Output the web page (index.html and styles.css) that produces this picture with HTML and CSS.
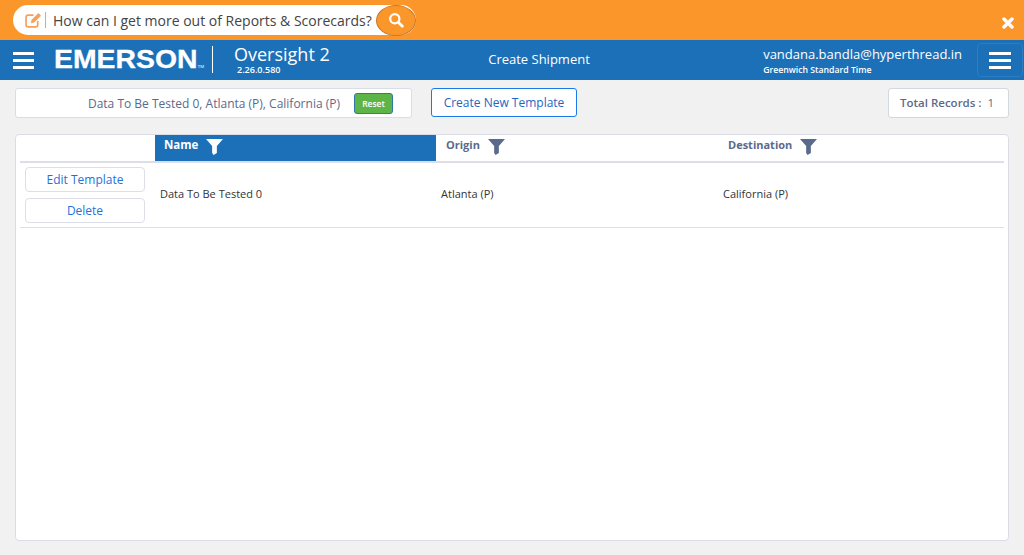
FILE: index.html
```html
<!DOCTYPE html>
<html lang="en">
<head>
  <meta charset="UTF-8">
  <title>Oversight 2</title>
  <link rel="stylesheet" href="styles.css">
</head>
<body>
  <div class="promo">
    <div class="promo-pill">
      <svg class="promo-edit" width="17" height="16" viewBox="0 0 16 15">
        <path d="M12 8.5V12a2 2 0 0 1-2 2H3a2 2 0 0 1-2-2V5a2 2 0 0 1 2-2h5" fill="none" stroke="#f5a15c" stroke-width="1.6"/>
        <path d="M5.5 10.5l.6-3L12.6.9l2.5 2.5-6.5 6.5z" fill="#f5a15c"/>
      </svg>
      <span class="promo-sep"></span>
      <span class="promo-text">How can I get more out of Reports &amp; Scorecards?</span>
      <span class="promo-search">
        <svg width="16" height="16" viewBox="0 0 16 16">
          <circle cx="6.8" cy="6.8" r="4.6" fill="none" stroke="#fff" stroke-width="2.2"/>
          <path d="M10.3 10.3l4 4" stroke="#fff" stroke-width="2.8" stroke-linecap="round"/>
        </svg>
      </span>
    </div>
    <svg class="promo-close" width="12" height="12" viewBox="0 0 12 12">
      <path d="M2 2l8 8M10 2l-8 8" stroke="#fff" stroke-width="3.4" stroke-linecap="round"/>
    </svg>
  </div>

  <header class="navbar">
    <button class="burger burger-left"><span></span><span></span><span></span></button>
    <div class="logo">EMERSON<small>TM</small></div>
    <div class="product">
      <div class="product-name">Oversight 2</div>
      <div class="product-version">2.26.0.580</div>
    </div>
    <div class="nav-link">Create Shipment</div>
    <div class="user">
      <div class="user-mail">vandana.bandla@hyperthread.in</div>
      <div class="user-zone">Greenwich Standard Time</div>
    </div>
    <button class="burger burger-right"><span></span><span></span><span></span></button>
  </header>

  <main class="content">
    <div class="toolbar">
      <div class="filter-box">
        <span class="filter-text">Data To Be Tested 0, Atlanta (P), California (P)</span>
        <button class="btn-reset">Reset</button>
      </div>
      <button class="btn-create">Create New Template</button>
      <div class="total">Total Records :&nbsp; <span class="total-num">1</span></div>
    </div>

    <div class="card">
      <div class="grid grid-head">
        <div class="th"></div>
        <div class="th th-active">Name
          <svg class="funnel" width="17" height="16" viewBox="0 0 18 17"><path d="M0 0h18l-6.5 7.5V15l-3.5 2-1.500-2V7.500z"/></svg>
        </div>
        <div class="th">Origin
          <svg class="funnel" width="17" height="16" viewBox="0 0 18 17"><path d="M0 0h18l-6.5 7.5V15l-3.5 2-1.500-2V7.500z"/></svg>
        </div>
        <div class="th th-dest">Destination
          <svg class="funnel" width="17" height="16" viewBox="0 0 18 17"><path d="M0 0h18l-6.5 7.5V15l-3.5 2-1.500-2V7.500z"/></svg>
        </div>
      </div>
      <div class="grid grid-row">
        <div class="actions">
          <button class="btn-row">Edit Template</button>
          <button class="btn-row">Delete</button>
        </div>
        <div class="td">Data To Be Tested 0</div>
        <div class="td">Atlanta (P)</div>
        <div class="td">California (P)</div>
      </div>
    </div>
  </main>
</body>
</html>
```

FILE: styles.css
```css
html, body {
  height: 100%;
}

body {
  margin: 0;
  font-family: "Open Sans", Arial, sans-serif;
  background-color: #f1f1f1;
  color: #222;
  overflow: hidden;
}

button {
  font-family: inherit;
  cursor: pointer;
}

/* top orange strip */
.promo {
  height: 40px;
  background-color: #fb962b;
  display: flex;
  align-items: center;
  justify-content: space-between;
  padding: 0 10px 0 13px;
  box-sizing: border-box;
}

.promo-pill {
  width: 403px;
  height: 30px;
  background-color: #fff;
  border-radius: 15px;
  display: flex;
  align-items: center;
  padding-left: 12px;
  box-sizing: border-box;
}

.promo-edit {
  flex: none;
}

.promo-sep {
  width: 1px;
  height: 16px;
  margin: 0 7px 0 3px;
  background-color: #f5a15c;
}

.promo-text {
  font-size: 14px;
  color: #444;
  white-space: nowrap;
}

.promo-search {
  width: 40px;
  height: 31px;
  margin-left: auto;
  border: 1px solid #c9782a;
  border-radius: 50%;
  background-color: #fb962b;
  box-sizing: border-box;
  display: flex;
  align-items: center;
  justify-content: center;
}

.promo-close {
  margin-top: 5px;
}

/* blue nav */
.navbar {
  height: 40px;
  background-color: #1c70b8;
  color: #fff;
  display: flex;
  align-items: center;
}

.burger {
  background: none;
  border: none;
  padding: 0;
  display: flex;
  flex-direction: column;
  justify-content: center;
  gap: 4px;
  box-sizing: border-box;
}

.burger span {
  display: block;
  height: 3px;
  background-color: #fff;
}

.burger-left {
  width: 21px;
  margin-left: 13px;
}

.burger-right {
  width: 46px;
  height: 34px;
  margin-left: 15px;
  margin-right: 1px;
  padding: 0 11px;
  border: 1px solid #2b7dc4;
  border-radius: 4px;
}

.logo {
  width: 142px;
  margin-left: 20px;
  margin-right: 1px;
  margin-top: -2px;
  font-family: "Liberation Sans", Arial, sans-serif;
  font-size: 25px;
  font-weight: bold;
  line-height: 1;
  white-space: nowrap;
  transform: scaleX(1.135);
  transform-origin: left center;
  -webkit-text-stroke: 0.3px #fff;
}

.logo small {
  font-size: 4px;
  font-weight: normal;
  -webkit-text-stroke: 0;
}

.product {
  margin-left: 15px;
  padding-left: 21px;
  height: 27px;
  border-left: 1px solid #fff;
  width: 180px;
  margin-top: -1px;
  box-sizing: content-box;
}

.product-name {
  font-size: 18px;
  line-height: 20px;
  margin-top: -2px;
}

.product-version {
  font-size: 9px;
  font-weight: 600;
  line-height: 12px;
  margin-left: 3px;
}

.nav-link {
  width: 102px;
  font-size: 13px;
  text-align: center;
  margin-left: 74px;
  margin-top: -2px;
}

.user {
  margin-left: auto;
}

.user-mail {
  font-size: 13px;
  line-height: 18px;
}

.user-zone {
  font-size: 8.7px;
  font-weight: 600;
  line-height: 12px;
  margin-top: 1px;
}

/* page content */
.content {
  padding: 8px 15px 0;
}

.toolbar {
  height: 30px;
  display: flex;
  align-items: flex-start;
}

.filter-box {
  width: 397px;
  height: 30px;
  display: flex;
  align-items: center;
  justify-content: flex-end;
  padding-right: 18px;
  background-color: #fff;
  border: 1px solid #d9dde6;
  border-radius: 3px;
  box-sizing: border-box;
}

.filter-text {
  font-size: 12px;
  color: #5a6a8c;
}

.btn-reset {
  width: 39px;
  height: 21px;
  margin-left: 14px;
  padding: 0;
  font-size: 8.5px;
  font-weight: 600;
  color: #fff;
  background-color: #5cb546;
  border: 1px solid #2f77a8;
  border-radius: 3px;
}

.btn-create {
  width: 146px;
  height: 29px;
  margin-left: 19px;
  padding: 0;
  font-size: 12px;
  color: #1f66c2;
  background-color: #fff;
  border: 1px solid #1a7ae8;
  border-radius: 3px;
}

.total {
  width: 121px;
  height: 30px;
  margin-left: auto;
  padding-left: 1px;
  line-height: 28px;
  text-align: left;
  text-indent: 10px;
  font-size: 11.5px;
  font-weight: 600;
  color: #5a6a8c;
  background-color: #fff;
  border: 1px solid #d3d7e0;
  border-radius: 3px;
  box-sizing: border-box;
}

.total-num {
  font-weight: 400;
}

.card {
  height: 407px;
  margin-top: 16px;
  padding: 0 4px;
  background-color: #fff;
  border: 1px solid #dadde6;
  border-radius: 4px;
  box-sizing: border-box;
}

.grid {
  display: grid;
  grid-template-columns: 135px 281px 282px 286px;
}

.grid-head {
  height: 28px;
  border-bottom: 2px solid #dcdfe8;
  box-sizing: border-box;
}

.th {
  display: flex;
  align-items: flex-start;
  gap: 8px;
  padding: 2px 0 0 10px;
  font-size: 11px;
  font-weight: 700;
  line-height: 16px;
  color: #5a6a8c;
}

.th-active {
  padding-left: 9px;
  color: #fff;
  background-color: #1c70b8;
  font-size: 11.5px;
}

.th-dest {
  padding-left: 10px;
}

.funnel {
  margin-top: 2px;
  fill: #5a6a8c;
}

.th-active .funnel {
  fill: #fff;
}

.grid-row {
  height: 65px;
  border-bottom: 1px solid #dcdfe8;
  box-sizing: border-box;
}

.actions {
  display: flex;
  flex-direction: column;
  gap: 6px;
  padding: 4px 0 0 5px;
}

.btn-row {
  width: 120px;
  height: 25px;
  padding: 0;
  font-size: 12px;
  color: #1f72d8;
  background-color: #fff;
  border: 1px solid #dcdfe8;
  border-radius: 4px;
}

.td {
  display: flex;
  align-items: center;
  padding-left: 5px;
  padding-bottom: 4px;
  font-size: 11px;
  color: #333;
}
```
